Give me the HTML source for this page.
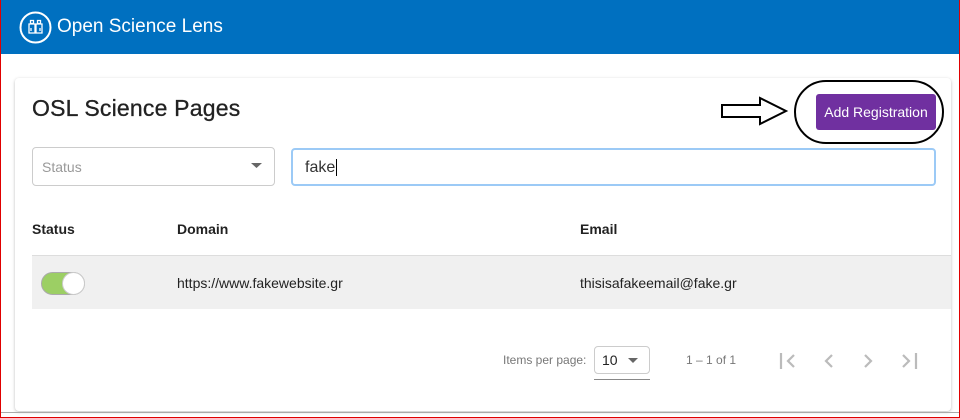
<!DOCTYPE html>
<html><head><style>
*{box-sizing:border-box;margin:0;padding:0}
body{width:960px;height:418px;overflow:hidden;background:#fff;font-family:"Liberation Sans",sans-serif;position:relative}
.frame{position:absolute;left:0;top:0;width:960px;height:418px;border:1px solid #e00000;border-top:none;pointer-events:none;z-index:5}
.hdr{position:absolute;left:0;top:0;width:960px;height:54px;background:#0070c0;color:#fff}
.hdr .t{position:absolute;left:57px;top:16px;font-size:19px}
.card{position:absolute;left:15px;top:78px;width:936px;height:333px;border-radius:4px;box-shadow:0 1px 3px rgba(0,0,0,.25);background:#fff}
.abs{position:absolute}
</style></head><body>
<div class="hdr">
<svg class="abs" style="left:19px;top:11px" width="33" height="33" viewBox="0 0 33 33"><circle cx="16.5" cy="16.5" r="15" fill="none" stroke="#fff" stroke-width="2"/>
<path d="M11.5 9.5h3v3h-3zM18.5 9.5h3v3h-3zM10 13h6v9h-6zM17 13h6v9h-6zM16 15h1M12 17v3M21 17v3" fill="none" stroke="#fff" stroke-width="1.3"/></svg>
<div class="t">Open Science Lens</div>
</div>
<div class="card"></div>
<div class="abs" style="left:32px;top:95px;font-size:23px;color:#222;letter-spacing:0.2px;-webkit-text-stroke:0.3px #222">OSL Science Pages</div>
<svg class="abs" style="left:720px;top:96px" width="70" height="30"><path d="M2 9h38v-7l26 13-26 13v-7H2z" fill="#fff" stroke="#000" stroke-width="2"/></svg>
<div class="abs" style="left:794px;top:80px;width:150px;height:64px;border:2px solid #000;border-radius:32px"></div>
<div class="abs" style="left:816px;top:94px;width:120px;height:36px;background:#7030a0;border-radius:3px;color:#fff;font-size:14px;line-height:36px;text-align:center">Add Registration</div>
<div class="abs" style="left:32px;top:147px;width:243px;height:39px;border:1px solid #ccc;border-radius:4px;color:#999;font-size:14px;padding:11px 9px">Status</div>
<svg class="abs" style="left:251px;top:163px" width="12" height="7"><path d="M0 0h11L5.5 5z" fill="#666"/></svg>
<div class="abs" style="left:291px;top:148px;width:645px;height:38px;border:2px solid #9ccaf6;border-radius:4px;font-size:16px;padding:9px 12px;color:#333">fake<span style="border-left:1px solid #000;margin-left:1px"></span></div>
<div class="abs" style="left:32px;top:221px;font-size:14px;font-weight:bold;color:#222">Status</div>
<div class="abs" style="left:177px;top:221px;font-size:14px;font-weight:bold;color:#222">Domain</div>
<div class="abs" style="left:580px;top:221px;font-size:14px;font-weight:bold;color:#222">Email</div>
<div class="abs" style="left:32px;top:255px;width:919px;height:54px;background:#f0f0f0;border-top:1px solid #ddd"></div>
<div class="abs" style="left:41px;top:272px;width:44px;height:23px;border-radius:12px;background:#9ccf64;border:1px solid #aaa"></div>
<div class="abs" style="left:62px;top:272px;width:23px;height:23px;border-radius:50%;background:#fff;border:1px solid #ccc"></div>
<div class="abs" style="left:177px;top:275px;font-size:14px;color:#222">https://www.fakewebsite.gr</div>
<div class="abs" style="left:580px;top:275px;font-size:14px;color:#222">thisisafakeemail@fake.gr</div>
<div class="abs" style="left:503px;top:353px;font-size:12px;color:#777">Items per page:</div>
<div class="abs" style="left:594px;top:346px;width:56px;height:28px;border:1px solid #ccc;border-radius:4px;font-size:14px;padding:5px 7px;color:#222">10</div>
<div class="abs" style="left:594px;top:379px;width:56px;height:1px;background:#888"></div>
<svg class="abs" style="left:628px;top:358px" width="10" height="6"><path d="M0 0h10L5 5z" fill="#666"/></svg>
<div class="abs" style="left:686px;top:353px;font-size:12px;color:#777">1 – 1 of 1</div>
<svg class="abs" style="left:778px;top:350px" width="145" height="22" fill="none" stroke="#bbb" stroke-width="2.2"><path d="M3 3v16M16 5l-6 6 6 6M54 5l-6 6 6 6M87 5l6 6-6 6M125 5l6 6-6 6M138 3v16"/></svg>
<div class="abs" style="left:0;top:412px;width:960px;height:1px;background:#aaa"></div>
<div class="frame"></div>
</body></html>
